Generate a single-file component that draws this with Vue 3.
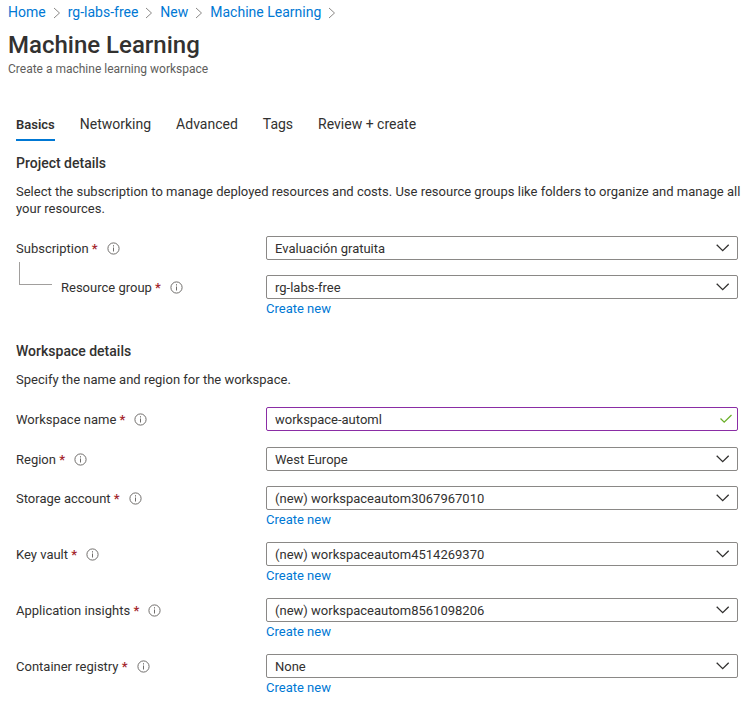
<script setup>
import { reactive, ref } from 'vue'

const crumbs = ['Home', 'rg-labs-free', 'New', 'Machine Learning']
const tabs = ['Basics', 'Networking', 'Advanced', 'Tags', 'Review + create']
const activeTab = ref('Basics')

const sections = reactive([
  {
    title: 'Project details',
    text: 'Select the subscription to manage deployed resources and costs. Use resource groups like folders to organize and manage all your resources.',
    fields: [
      { id: 'subscription', label: 'Subscription', value: 'Evaluación gratuita' },
      { id: 'resource-group', label: 'Resource group', value: 'rg-labs-free', create: true, child: true },
    ],
  },
  {
    title: 'Workspace details',
    text: 'Specify the name and region for the workspace.',
    fields: [
      { id: 'workspace-name', label: 'Workspace name', value: 'workspace-automl', input: true },
      { id: 'region', label: 'Region', value: 'West Europe' },
      { id: 'storage-account', label: 'Storage account', value: '(new) workspaceautom3067967010', create: true },
      { id: 'key-vault', label: 'Key vault', value: '(new) workspaceautom4514269370', create: true },
      { id: 'application-insights', label: 'Application insights', value: '(new) workspaceautom8561098206', create: true },
      { id: 'container-registry', label: 'Container registry', value: 'None', create: true },
    ],
  },
])
</script>

<template>
  <div class="page">
    <nav class="crumbs">
      <template v-for="crumb in crumbs" :key="crumb">
        <a href="#">{{ crumb }}</a>
        <svg class="crumb-sep" width="8" height="12" viewBox="0 0 8 12"><path d="M1 1l5.5 5L1 11" /></svg>
      </template>
    </nav>

    <header class="heading">
      <h1>Machine Learning</h1>
      <p>Create a machine learning workspace</p>
    </header>

    <main class="content">
      <div class="tabs" role="tablist">
        <button
          v-for="tab in tabs"
          :key="tab"
          type="button"
          role="tab"
          class="tab"
          :class="{ active: tab === activeTab }"
          :aria-selected="tab === activeTab"
          @click="activeTab = tab"
        >{{ tab }}</button>
      </div>

      <section v-for="section in sections" :key="section.title" class="section">
        <h2>{{ section.title }}</h2>
        <p class="intro">{{ section.text }}</p>
        <div class="fields">
          <div v-for="field in section.fields" :key="field.id" class="row" :class="{ 'row-input': field.input }">
            <div class="label">
              <span v-if="field.child" class="branch"></span>
              <label :for="field.id">{{ field.label }} <span class="required">*</span></label>
              <svg class="info" width="13" height="13" viewBox="0 0 13 13">
                <circle cx="6.5" cy="6.5" r="5.6" />
                <path d="M6.5 5.5v4M6.5 3.2v1.300" />
              </svg>
            </div>
            <div class="control">
              <div class="box">
                <template v-if="field.input">
                  <input :id="field.id" v-model="field.value" type="text" />
                  <svg class="mark check" width="14" height="10" viewBox="0 0 14 10"><path d="M1.500 4.500l3.700 3.700 7.300-7.200" /></svg>
                </template>
                <template v-else>
                  <select :id="field.id" v-model="field.value">
                    <option>{{ field.value }}</option>
                  </select>
                  <svg class="mark chevron" width="14" height="8" viewBox="0 0 14 8"><path d="M0.700 0.700L6.700 6.700l6-6" /></svg>
                </template>
              </div>
              <a v-if="field.create" href="#" class="create">Create new</a>
            </div>
          </div>
        </div>
      </section>
    </main>
  </div>
</template>

<style>
body {
  margin: 0;
  background: #fff;
}
</style>

<style scoped>
.page {
  padding: 4px 8px 8px;
  color: #323130;
  font: 13px/17px Roboto, 'Noto Sans', sans-serif;
}
a {
  color: #0078d4;
  text-decoration: none;
}
h1, h2, p {
  margin: 0;
}
.crumbs {
  display: flex;
  align-items: center;
  gap: 7px;
  font-size: 14px;
}
.crumb-sep {
  fill: none;
  stroke: #8a8886;
}
.heading h1 {
  padding-top: 8px;
  font-size: 24px;
  line-height: 32px;
  font-weight: 500;
}
.heading p {
  color: #605e5c;
  font-size: 12px;
  line-height: 16px;
}
.content {
  padding: 36px 0 0 8px;
}
.tabs {
  display: flex;
  gap: 25px;
  font-size: 14px;
}
.tab {
  padding: 3px 0 6px;
  border: 0;
  border-bottom: 2px solid transparent;
  background: none;
  color: inherit;
  font: inherit;
}
.tab.active {
  border-color: #0078d4;
  font-size: 13px;
  font-weight: 600;
}
.section {
  padding-top: 14px;
}
.section + .section {
  padding-top: 27px;
}
h2 {
  font-size: 14px;
  line-height: 17px;
  font-weight: 500;
}
.intro {
  padding: 11px 0 19px;
}
.fields {
  display: flex;
  flex-direction: column;
  gap: 15px;
  padding-right: 9px;
}
.row {
  display: grid;
  grid-template-columns: 250px 1fr;
  align-items: start;
}
.row-input {
  min-height: 25px;
}
.label {
  display: flex;
  align-items: center;
  height: 24px;
}
.required {
  color: #a4262c;
  font-weight: 600;
}
.branch {
  box-sizing: border-box;
  align-self: flex-start;
  width: 33px;
  height: 23px;
  margin: -13px 9px 0 3px;
  border: solid #a19f9d;
  border-width: 0 0 1px 1px;
}
.info {
  margin-left: 9px;
  fill: none;
  stroke: #706e6c;
}
.box {
  position: relative;
}
input, select {
  display: block;
  box-sizing: border-box;
  width: 100%;
  height: 24px;
  padding: 0 32px 0 8px;
  border: 1px solid #8a8886;
  border-radius: 2px;
  outline: 0;
  background: #fff;
  color: inherit;
  font: inherit;
  appearance: none;
}
input {
  border-color: #8a2da5;
}
.mark {
  position: absolute;
  top: 8px;
  right: 8px;
  fill: none;
  stroke: #323130;
  stroke-width: 1.3;
  pointer-events: none;
}
.check {
  top: 7px;
  right: 5px;
  stroke: #6bb02a;
}
.create {
  display: block;
  margin-bottom: -1px;
  padding-top: 1px;
}
</style>
